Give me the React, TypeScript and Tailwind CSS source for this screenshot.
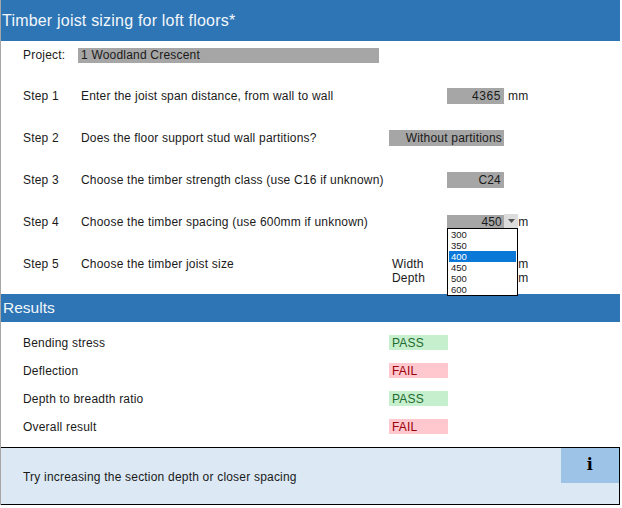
const font = "font-['Liberation_Sans',Arial,sans-serif]";

function Row({ label, text, children }: { label: string; text: string; children?: React.ReactNode }) {
  return (
    <div className="grid grid-cols-[58px_308px_115px_1fr] items-center h-[42px] pl-[23px] pt-[2px] text-[12px] tracking-[0.2px] text-[#1a1a1a]">
      <span>{label}</span>
      <span>{text}</span>
      {children}
    </div>
  );
}

function Result({ label, pass }: { label: string; pass: boolean }) {
  return (
    <div className="flex items-center h-[28px] pl-[23px] text-[12px] tracking-[0.2px] text-[#1a1a1a]">
      <span className="w-[366px] pt-[2px]">{label}</span>
      <span className={`w-[59px] h-[15px] mt-[1px] pl-[3px] leading-[16px] ${pass ? "bg-[#c6efce] text-[#1f6b2e]" : "bg-[#ffc7ce] text-[#9c0006]"}`}>
        {pass ? "PASS" : "FAIL"}
      </span>
    </div>
  );
}

export default function App() {
  const options = ["300", "350", "400", "450", "500", "600"];

  return (
    <div className={`${font} w-[622px] h-[508px] bg-white overflow-hidden`}>
      <div className="w-[620px] h-[505px] border-l border-[#a6a6a6] flex flex-col">

        {/* Title */}
        <div className="h-[41px] shrink-0 bg-[#2e75b6] pl-[1px] flex items-center text-[16px] tracking-[0.2px] text-[#f2f7fb]">
          Timber joist sizing for loft floors*
        </div>

        {/* Project */}
        <div className="flex items-center h-[33px] pl-[22px] pb-[8px] pt-[5px] text-[12px] tracking-[0.2px] text-[#1a1a1a]">
          <span className="w-[55px] pb-[1px]">Project:</span>
          <span className="w-[301px] h-[15px] leading-[14px] bg-[#a6a6a6] pl-[3px]">1 Woodland Crescent</span>
        </div>

        <div className="relative -ml-px">
          <Row label="Step 1" text="Enter the joist span distance, from wall to wall">
            <span className="justify-self-end w-[57px] h-[16px] leading-[16px] bg-[#a6a6a6] text-right pr-[3px] tracking-[0.6px]">4365</span>
            <span className="pl-[4px]">mm</span>
          </Row>
          <Row label="Step 2" text="Does the floor support stud wall partitions?">
            <span className="h-[16px] leading-[16px] bg-[#a6a6a6] text-right pr-[2px]">Without partitions</span>
          </Row>
          <Row label="Step 3" text="Choose the timber strength class (use C16 if unknown)">
            <span className="justify-self-end w-[57px] h-[16px] leading-[16px] bg-[#a6a6a6] text-right pr-[3px]">C24</span>
          </Row>
          <Row label="Step 4" text="Choose the timber spacing (use 600mm if unknown)">
            <span className="justify-self-end w-[57px] h-[14px] leading-[15px] bg-[#a6a6a6] text-right pr-[2px]">450</span>
            <span className="pl-[4px]">mm</span>
          </Row>
          <div className="grid grid-cols-[58px_308px_115px_1fr] items-center h-[42px] pl-[23px] pt-[1px] text-[12px] tracking-[0.2px] text-[#1a1a1a]">
            <span>Step 5</span>
            <span>Choose the timber joist size</span>
            <div className="pl-[3px] leading-[14px] pt-[14px] pb-[1px]">
              <div>Width</div>
              <div>Depth</div>
            </div>
            <div className="pl-[4px] leading-[14px] pt-[14px] pb-[1px]">
              <div>mm</div>
              <div>mm</div>
            </div>
          </div>

          {/* Open dropdown */}
          <div className="absolute left-[504px] top-[140px] w-[14px] h-[14px] bg-[#dcdcdc] flex items-center justify-center">
            <svg width="7" height="4" viewBox="0 0 7 4"><path d="M0 0h7L3.5 4z" fill="#555" /></svg>
          </div>
          <div className="absolute left-[447px] top-[154px] w-[71px] h-[68px] bg-white border border-black pl-px pr-px text-[9.5px] leading-[11px] text-[#1a1a1a]">
            {options.map((o) => (
              <div key={o} className={`h-[11px] pl-[2px] ${o === "400" ? "bg-[#0a78d7] text-white" : ""}`}>{o}</div>
            ))}
          </div>
        </div>

        {/* Results */}
        <div className="h-[28px] shrink-0 mt-[10px] bg-[#2e75b6] pl-[2px] flex items-center text-[15.5px] text-[#f2f7fb]">
          Results
        </div>
        <div className="pt-[6px] -ml-px">
          <Result label="Bending stress" pass />
          <Result label="Deflection" pass={false} />
          <Result label="Depth to breadth ratio" pass />
          <Result label="Overall result" pass={false} />
        </div>

        {/* Advice */}
        <div className="mt-[7px] h-[59px] flex justify-between border-y border-r border-black bg-[#dce9f5] text-[12px] tracking-[0.2px] text-[#1a1a1a]">
          <span className="pl-[22px] pt-[20px]">Try increasing the section depth or closer spacing</span>
          <div className="w-[58px] h-[35px] bg-[#9dc3e6] flex items-center justify-center font-['DejaVu_Serif',serif] font-bold text-[16px] text-black">
            i
          </div>
        </div>
      </div>
    </div>
  );
}
